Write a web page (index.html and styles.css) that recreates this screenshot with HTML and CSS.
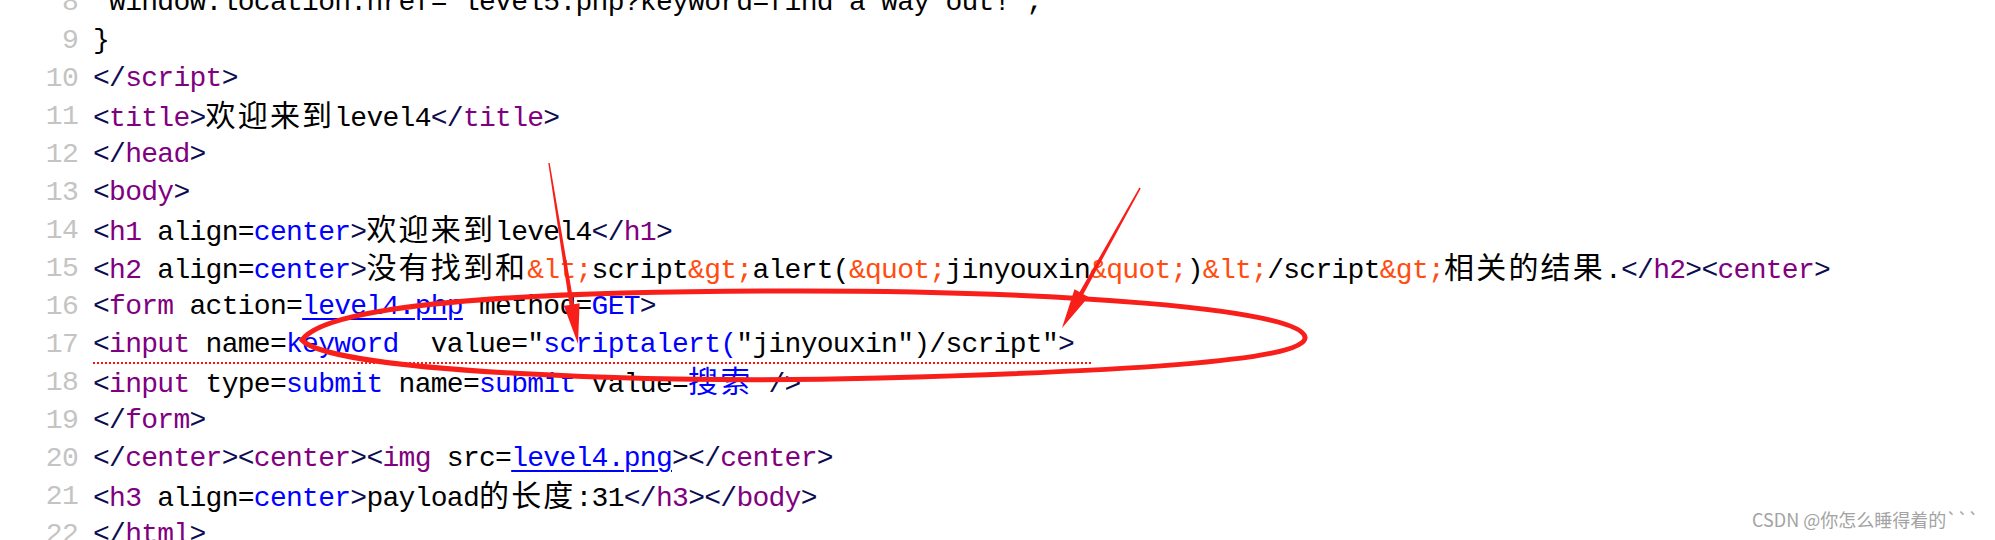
FILE: index.html
```html
<!DOCTYPE html>
<html lang="zh-CN">
<head>
    <meta charset="UTF-8">
    <title>level4 source</title>
    <link rel="stylesheet" href="styles.css">
</head>
<body>
    <div class="editor">
        <div class="line"><span class="ln">8</span><span class="code"> window.location.href="level5.php?keyword=find a way out!";</span></div>
        <div class="line"><span class="ln">9</span><span class="code">}</span></div>
        <div class="line"><span class="ln">10</span><span class="code"><span class="b">&lt;/</span><span class="t">script</span><span class="b">&gt;</span></span></div>
        <div class="line"><span class="ln">11</span><span class="code"><span class="b">&lt;</span><span class="t">title</span><span class="b">&gt;</span><span class="zh">欢迎来到</span>level4<span class="b">&lt;/</span><span class="t">title</span><span class="b">&gt;</span></span></div>
        <div class="line"><span class="ln">12</span><span class="code"><span class="b">&lt;/</span><span class="t">head</span><span class="b">&gt;</span></span></div>
        <div class="line"><span class="ln">13</span><span class="code"><span class="b">&lt;</span><span class="t">body</span><span class="b">&gt;</span></span></div>
        <div class="line"><span class="ln">14</span><span class="code"><span class="b">&lt;</span><span class="t">h1</span> align=<span class="v">center</span><span class="b">&gt;</span><span class="zh">欢迎来到</span>level4<span class="b">&lt;/</span><span class="t">h1</span><span class="b">&gt;</span></span></div>
        <div class="line"><span class="ln">15</span><span class="code"><span class="b">&lt;</span><span class="t">h2</span> align=<span class="v">center</span><span class="b">&gt;</span><span class="zh">没有找到和</span><span class="e">&amp;lt;</span>script<span class="e">&amp;gt;</span>alert(<span class="e">&amp;quot;</span>jinyouxin<span class="e">&amp;quot;</span>)<span class="e">&amp;lt;</span>/script<span class="e">&amp;gt;</span><span class="zh">相关的结果</span>.<span class="b">&lt;/</span><span class="t">h2</span><span class="b">&gt;&lt;</span><span class="t">center</span><span class="b">&gt;</span></span></div>
        <div class="line"><span class="ln">16</span><span class="code"><span class="b">&lt;</span><span class="t">form</span> action=<span class="v u">level4.php</span> method=<span class="v">GET</span><span class="b">&gt;</span></span></div>
        <div class="line"><span class="ln">17</span><span class="code err"><span class="b">&lt;</span><span class="t">input</span> name=<span class="v">keyword</span>  value="<span class="v">scriptalert(</span>"jinyouxin")/script"<span class="b">&gt;</span></span></div>
        <div class="line"><span class="ln">18</span><span class="code"><span class="b">&lt;</span><span class="t">input</span> type=<span class="v">submit</span> name=<span class="v">submit</span> value=<span class="v zh">搜索</span> <span class="b">/&gt;</span></span></div>
        <div class="line"><span class="ln">19</span><span class="code"><span class="b">&lt;/</span><span class="t">form</span><span class="b">&gt;</span></span></div>
        <div class="line"><span class="ln">20</span><span class="code"><span class="b">&lt;/</span><span class="t">center</span><span class="b">&gt;&lt;</span><span class="t">center</span><span class="b">&gt;&lt;</span><span class="t">img</span> src=<span class="v u">level4.png</span><span class="b">&gt;&lt;/</span><span class="t">center</span><span class="b">&gt;</span></span></div>
        <div class="line"><span class="ln">21</span><span class="code"><span class="b">&lt;</span><span class="t">h3</span> align=<span class="v">center</span><span class="b">&gt;</span>payload<span class="zh">的长度</span>:31<span class="b">&lt;/</span><span class="t">h3</span><span class="b">&gt;&lt;/</span><span class="t">body</span><span class="b">&gt;</span></span></div>
        <div class="line"><span class="ln">22</span><span class="code"><span class="b">&lt;/</span><span class="t">html</span><span class="b">&gt;</span></span></div>
    </div>

    <!-- red hand-drawn marks -->
    <svg class="marks" width="1995" height="540" viewBox="0 0 1995 540">
        <path d="M302 340 C330 300 560 291 800 291 C1050 291 1300 308 1305 337 C1310 362 1100 372 880 378 C650 384 330 372 302 340 Z" fill="none" stroke="#f81f1a" stroke-width="5"/>
        <polygon points="548.3,163.1 569.5,304.9 563.8,305.8 578,344 579.6,303.2 573.9,304.2 549.7,162.9" fill="#f81f1a"/>
        <polygon points="1139.4,187.6 1079.6,292 1074.5,289.2 1062,328 1088.5,297 1083.4,294.2 1140.7,188.4" fill="#f81f1a"/>
    </svg>

    <div class="watermark">CSDN @你怎么睡得着的```</div>
</body>
</html>
```
FILE: styles.css
```css
* {
    box-sizing: border-box;
}

body {
    margin: 0;
    width: 1995px;
    height: 540px;
    overflow: hidden;
    background-color: #fff;
    position: relative;
}

.editor {
    margin-top: -16px;
    font-family: "Liberation Mono", "Noto Sans CJK SC", monospace;
    font-size: 28px;
    letter-spacing: -0.72px;
    color: #000;
}

.line {
    display: flex;
    height: 38px;
    line-height: 38px;
    white-space: pre;
}

.ln {
    flex: none;
    width: 78px;
    text-align: right;
    color: #c4c4c4;
}

.code {
    padding-left: 15px;
}

.b {
    color: #0c0c50;
}

.t {
    color: #800080;
}

.v {
    color: #0000ff;
}

.e {
    color: #ff4c10;
}

.u {
    text-decoration: underline;
    text-decoration-thickness: 2px;
    text-underline-offset: 4px;
}

.zh {
    font-family: "Noto Sans CJK SC", sans-serif;
    font-size: 30px;
    line-height: 30px;
    letter-spacing: 2.16px;
}

.err {
    margin-left: 15px;
    padding-left: 0;
    padding-right: 18px;
    background: repeating-linear-gradient(90deg, #ff1010 0 2px, transparent 2px 4px) left bottom / 100% 2px no-repeat;
}

.marks {
    position: absolute;
    left: 0;
    top: 0;
    pointer-events: none;
}

.watermark {
    position: absolute;
    right: 16px;
    bottom: 8px;
    font-family: "Noto Sans CJK SC", sans-serif;
    font-size: 18px;
    color: #a3a3a3;
    text-shadow: 0 0 1px #fff;
}
```
